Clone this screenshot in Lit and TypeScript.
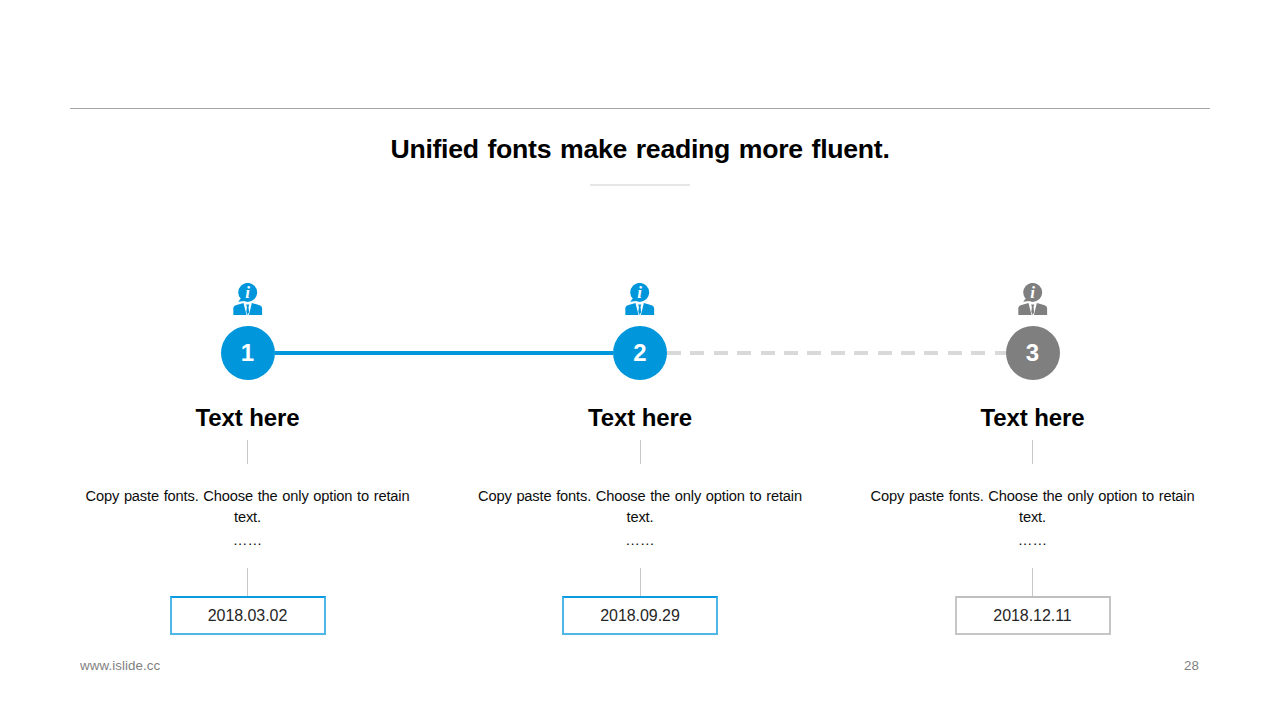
import { LitElement, html, css, svg } from "lit";
import { customElement } from "lit/decorators.js";

const BLUE = "#0096db";
const GRAY = "#7f7f7f";

const person = (color: string) => html`<svg class="person" viewBox="0.5 0 30 32" width="30" height="32" aria-hidden="true">
  ${svg`
  <circle cx="15.2" cy="9.4" r="9.5" fill="${color}"></circle>
  <path d="M8.8 15 L5.6 18.8 L12 18 Z" fill="${color}"></path>
  <text x="15" y="15.4" text-anchor="middle" font-family="Liberation Serif, serif" font-weight="700" font-style="italic" font-size="17" fill="#fff">i</text>
  <path d="M0.8 32 V25.4 C0.8 23.6 2 22.8 4 22 L11 20 L14 32 Z" fill="${color}"></path>
  <path d="M29.6 32 V25.4 C29.6 23.6 28.4 22.8 26.4 22 L19.4 20 L16.4 32 Z" fill="${color}"></path>
  <path d="M13.6 21.4 H16.8 L16 24 L16.6 29 L15.2 32 L13.8 29 L14.4 24 Z" fill="${color}"></path>
  `}
</svg>`;

const items = [
  { label: "1", date: "2018.03.02", active: true },
  { label: "2", date: "2018.09.29", active: true },
  { label: "3", date: "2018.12.11", active: false },
];

@customElement("app-root")
export class AppRoot extends LitElement {
  static styles = css`
    :host {
      display: block;
      width: 1280px;
      height: 720px;
      background: #fff;
      font-family: "Liberation Sans", Arial, sans-serif;
      color: #000;
      overflow: hidden;
    }
    .page {
      height: 720px;
      box-sizing: border-box;
      padding-top: 108px;
      display: flex;
      flex-direction: column;
    }
    .top-rule {
      height: 1px;
      margin: 0 70px;
      background: #a6a6a6;
    }
    h1 {
      margin: 24px 0 0;
      font-size: 26.67px;
      line-height: 32px;
      font-weight: 700;
      text-align: center;
      word-spacing: 1.6px;
      letter-spacing: -0.28px;
    }
    .short-rule {
      width: 100px;
      height: 2px;
      margin: 19px auto 0;
      background: #e6e6e6;
    }
    .cols {
      display: grid;
      grid-template-columns: repeat(3, 340px);
      column-gap: 52.5px;
      margin-left: 77.5px;
      width: 1125px;
    }
    .col {
      display: flex;
      flex-direction: column;
      align-items: center;
    }
    .icons {
      margin-top: 97px;
    }
    .person {
      display: block;
    }
    .track {
      display: flex;
      align-items: center;
      margin: 11px 0 0 220.5px;
      width: 839px;
    }
    .node {
      flex: none;
      width: 54px;
      height: 54px;
      border-radius: 50%;
      display: flex;
      align-items: center;
      justify-content: center;
      color: #fff;
      font-size: 24px;
      font-weight: 700;
    }
    .node.on {
      background: #0096db;
    }
    .node.off {
      background: #7f7f7f;
    }
    .link {
      flex: 1;
      height: 4px;
    }
    .link.solid {
      background: #0096db;
    }
    .link.dashed {
      background: repeating-linear-gradient(90deg, #d9d9d9 0 14px, transparent 14px 23.4px);
    }
    h2 {
      margin: 21px 0 0;
      font-size: 24px;
      line-height: 34px;
      font-weight: 700;
      white-space: nowrap;
      letter-spacing: -0.1px;
    }
    .tick {
      width: 1px;
      background: #c8c8c8;
    }
    .tick.one {
      height: 24px;
      margin-top: 5px;
    }
    .tick.two {
      height: 28px;
      margin-top: 17px;
    }
    p {
      margin: 22px 0 0;
      width: 340px;
      font-size: 14.67px;
      line-height: 21px;
      text-align: center;
      color: #0d0d0d;
      word-spacing: 0.85px;
      letter-spacing: -0.16px;
    }
    .dots {
      margin-top: 2px;
      font-size: 14.67px;
      line-height: 21px;
      color: #0d0d0d;
    }
    .date {
      box-sizing: border-box;
      width: 156px;
      height: 39px;
      border: 2px solid;
      display: flex;
      align-items: center;
      justify-content: center;
      font-size: 16px;
      letter-spacing: -0.05px;
      color: #262626;
    }
    .date.on {
      border-color: #0a9be0 #4fb6e8 #4fb6e8 #4fb6e8;
    }
    .date.off {
      border-color: #bfbfbf #c6c6c6 #c6c6c6 #c6c6c6;
    }
    footer {
      display: flex;
      justify-content: space-between;
      margin: 23px 81px 0 80px;
      font-size: 13.33px;
      line-height: 16px;
      letter-spacing: 0.08px;
      color: #7f7f7f;
    }
  `;

  render() {
    return html`<div class="page">
      <div class="top-rule"></div>
      <h1>Unified fonts make reading more fluent.</h1>
      <div class="short-rule"></div>
      <div class="cols icons">
        ${items.map((i) => html`<div class="col">${person(i.active ? BLUE : GRAY)}</div>`)}
      </div>
      <div class="track">
        <div class="node on">1</div>
        <div class="link solid"></div>
        <div class="node on">2</div>
        <div class="link dashed"></div>
        <div class="node off">3</div>
      </div>
      <div class="cols">
        ${items.map(
          (i) => html`<div class="col">
            <h2>Text here</h2>
            <div class="tick one"></div>
            <p>Copy paste fonts. Choose the only option to retain text.</p>
            <div class="dots">……</div>
            <div class="tick two"></div>
            <div class="date ${i.active ? "on" : "off"}">${i.date}</div>
          </div>`
        )}
      </div>
      <footer><span>www.islide.cc</span><span>28</span></footer>
    </div>`;
  }
}
